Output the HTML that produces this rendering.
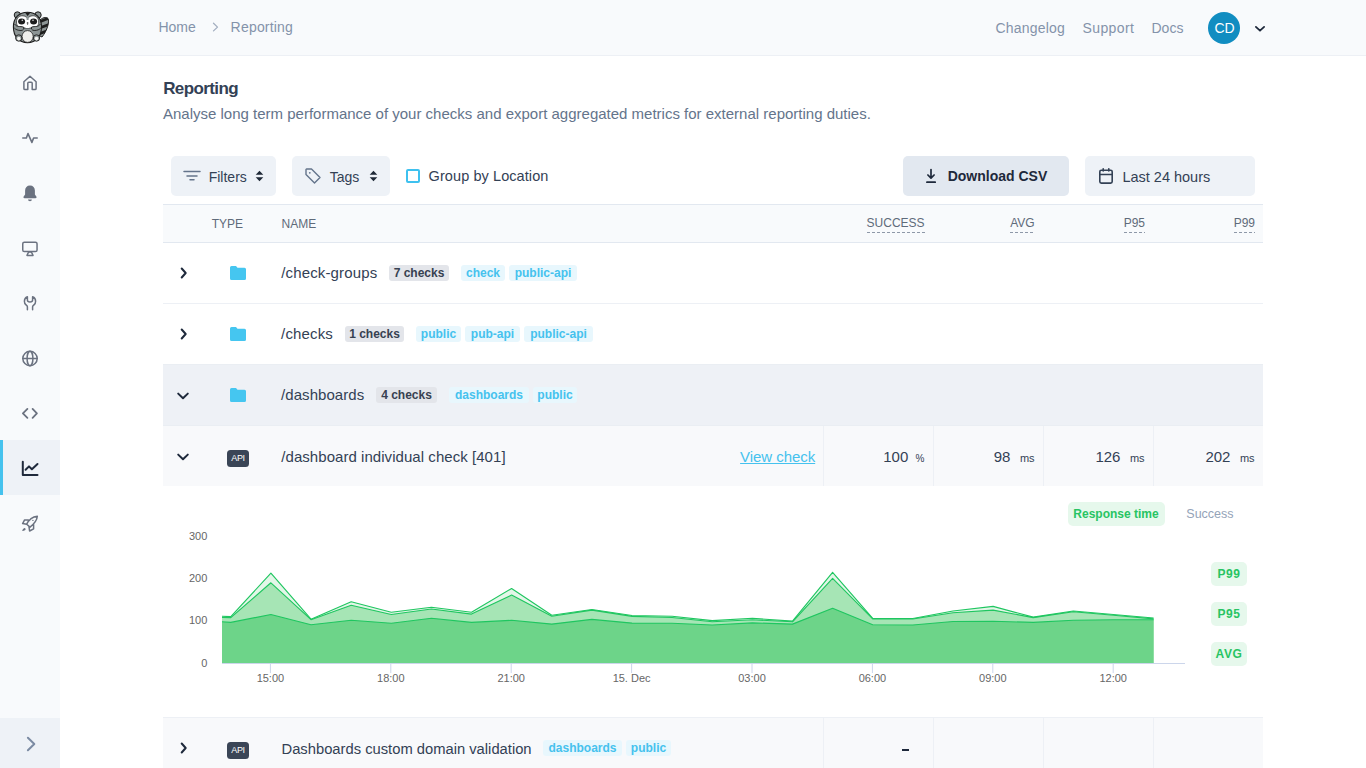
<!DOCTYPE html>
<html><head><meta charset="utf-8">
<style>
*{box-sizing:border-box;margin:0;padding:0}
html,body{width:1366px;height:768px;overflow:hidden;background:#fff;font-family:"Liberation Sans",sans-serif;color:#334155}
.abs{position:absolute}
.t{position:absolute;white-space:nowrap;line-height:1}
.badge{position:absolute;height:16px;border-radius:3px;font-weight:700;font-size:12px;line-height:16px;text-align:center;white-space:nowrap}
.gray{background:#e3e5ea;color:#374151}
.tag{background:#e8f7fd;color:#45c2ee}
svg{position:absolute;overflow:visible}
</style></head><body>
<div class="abs" style="left:0px;top:0px;width:60px;height:768px;background:#f8fafc;"></div>
<div class="abs" style="left:60px;top:0px;width:1306px;height:55px;background:#f8fafc;"></div>
<div class="abs" style="left:60px;top:55px;width:1306px;height:1px;background:#edf0f5;"></div>
<div class="abs" style="left:0px;top:440px;width:60px;height:55px;background:#eef2f7;"></div>
<div class="abs" style="left:0px;top:440px;width:3px;height:55px;background:#45c2ee;"></div>
<div class="abs" style="left:0px;top:718px;width:60px;height:50px;background:#eef2f7;"></div>
<svg style="left:18px;top:70.5px" width="24" height="24" viewBox="0 0 24 24" fill="none" stroke="#6b7280" stroke-width="1.5" stroke-linecap="round" stroke-linejoin="round"><path d="M5.9 10.8 L12 5.3 L18.1 10.8 V17.4 Q18.1 18.5 17 18.5 H14.2 V12.3 Q14.2 11.3 13.2 11.3 H10.8 Q9.8 11.3 9.8 12.3 V18.5 H7 Q5.9 18.5 5.9 17.4 Z"/></svg>
<svg style="left:18px;top:125.5px" width="24" height="24" viewBox="0 0 24 24" fill="none" stroke="#6b7280" stroke-width="1.6" stroke-linecap="round" stroke-linejoin="round"><path d="M4.8 12 H8.4 L10 7.6 L13.9 16.4 L15.6 12 H19.2"/></svg>
<svg style="left:18px;top:180.5px" width="24" height="24" viewBox="0 0 24 24" fill="none" stroke="#6b7280" stroke-width="1.5" stroke-linecap="round" stroke-linejoin="round"><path d="M7.1 13.5 V9.5 C7.1 6.5 9 4.5 12 4.5 C15 4.5 16.9 6.5 16.9 9.5 V13.5 L18.5 15.8 Q19 17.2 17.5 17.2 H6.5 Q5 17.2 5.5 15.8 Z" fill="#6b7280" stroke="none"/><path d="M10 18.5 H13.9 Q13.9 20.3 12 20.3 Q10 20.3 10 18.5 Z" fill="#6b7280" stroke="none"/></svg>
<svg style="left:18px;top:235.5px" width="24" height="24" viewBox="0 0 24 24" fill="none" stroke="#6b7280" stroke-width="1.5" stroke-linecap="round" stroke-linejoin="round"><rect x="4.75" y="6.25" width="14.3" height="9.3" rx="1.6"/><path d="M10.6 16 L9 19.4 H15 L13.4 16 Z"/></svg>
<svg style="left:18px;top:290.5px" width="24" height="24" viewBox="0 0 24 24" fill="none" stroke="#6b7280" stroke-width="1.5" stroke-linecap="round" stroke-linejoin="round"><path d="M9.4 18.8 V15.8 C9.4 15 8.8 14.5 8 13.8 C6.8 12.8 6.4 11.5 6.4 10.2 C6.4 8 7.7 6.3 9.4 5.7 V9 C9.4 10.3 10.4 11 12 11 C13.6 11 14.6 10.3 14.6 9 V5.7 C16.3 6.3 17.6 8 17.6 10.2 C17.6 11.5 17.2 12.8 16 13.8 C15.2 14.5 14.6 15 14.6 15.8 V18.8"/></svg>
<svg style="left:18px;top:345.5px" width="24" height="24" viewBox="0 0 24 24" fill="none" stroke="#6b7280" stroke-width="1.5" stroke-linecap="round" stroke-linejoin="round"><circle cx="12" cy="12.5" r="7.2"/><path d="M4.8 12.5 H19.2"/><ellipse cx="12" cy="12.5" rx="2.9" ry="7.2"/></svg>
<svg style="left:18px;top:400.5px" width="24" height="24" viewBox="0 0 24 24" fill="none" stroke="#6b7280" stroke-width="1.8" stroke-linecap="round" stroke-linejoin="round"><path d="M9.4 7.9 L4.9 12.4 L9.4 16.9 M14.6 7.9 L18.9 12.4 L14.6 16.9"/></svg>
<svg style="left:18px;top:455.5px" width="24" height="24" viewBox="0 0 24 24" fill="none" stroke="#1e293b" stroke-width="2" stroke-linecap="round" stroke-linejoin="round"><path d="M4.8 5.7 V18.9 H19.5"/><path d="M7.6 13.8 L11 10.4 L13.9 13.3 L19.5 8"/></svg>
<svg style="left:18px;top:510.5px" width="24" height="24" viewBox="0 0 24 24" fill="none" stroke="#6b7280" stroke-width="1.5" stroke-linecap="round" stroke-linejoin="round"><path d="M8.7 13.2 C10.5 9.5 14 5.8 19.3 5.2 C19 10 16.5 12.5 12 16.1 Z M10.3 8.9 H6.6 L4.6 12.6 L8.6 13.3 M15.6 13.6 V17.8 L11.6 20 L11 16"/><circle cx="14.9" cy="9.4" r="0.7" fill="#6b7280" stroke="none"/><path d="M4.2 20 C4.5 18.5 5.5 17.3 6.9 17.1 C7.6 17.6 7.8 18.3 7.3 19 C6.5 19.6 5.3 19.9 4.2 20 Z" fill="#6b7280" stroke="none"/></svg>
<svg style="left:18px;top:732px" width="24" height="24" viewBox="0 0 24 24" fill="none" stroke="#7b8ba3" stroke-width="2" stroke-linecap="round" stroke-linejoin="round"><path d="M9.9 5.8 L16.3 12 L9.9 18.2"/></svg>
<svg style="left:0;top:0" width="60" height="56" viewBox="0 0 60 56">
<defs><clipPath id="tc"><path d="M39 21 C42 17.5 46.5 16.5 48 18.5 C49.5 22 47.5 30 42 37 L38 35 Z"/></clipPath></defs>
<path d="M39 21 C42 17.5 46.5 16.5 48 18.5 C49.5 22 47.5 30 42 37 L38 35 Z" fill="#8d9595" stroke="#1d1d1d" stroke-width="1"/>
<g clip-path="url(#tc)" stroke="#1d1d1d" stroke-width="2.8"><path d="M38 22.5 L49 18 M38 28.5 L49 24.5 M37 34.5 L48 30.5"/></g>
<circle cx="17.4" cy="15" r="3.2" fill="#8d9595" stroke="#1d1d1d" stroke-width="1"/>
<circle cx="38" cy="15" r="3.2" fill="#8d9595" stroke="#1d1d1d" stroke-width="1"/>
<path d="M27.5 12.2 C36 12.2 41.5 18 41.5 27 C41.5 36.5 36 42.6 27.5 42.6 C19 42.6 13.4 36.5 13.4 27 C13.4 18 19 12.2 27.5 12.2 Z" fill="#8d9595" stroke="#1d1d1d" stroke-width="1.1"/>
<path d="M25 12.4 L30.5 12.4 L27.6 16 Z" fill="#1d1d1d"/>
<path d="M16.5 22 C16.5 17.5 19.5 15.5 23 15.8 C25 16 26 17 27.6 18 C29.2 17 30.2 16 32.2 15.8 C35.7 15.5 38.7 17.5 38.7 22 C38.7 26 36 28 33 28 L22 28 C19 28 16.5 26 16.5 22 Z" fill="#fff" stroke="#1d1d1d" stroke-width="0.7"/>

<rect x="25.5" y="19" width="4" height="9" fill="#fff"/>
<path d="M26.3 16.5 L28.9 16.5 L28.5 20 L26.7 20 Z" fill="#8d9595"/>
<ellipse cx="21.6" cy="21.5" rx="3.5" ry="3" fill="#1d1d1d"/>
<ellipse cx="33.6" cy="21.5" rx="3.5" ry="3" fill="#1d1d1d"/>
<circle cx="22.3" cy="20.2" r="0.8" fill="#ddd"/><circle cx="33" cy="20.2" r="0.8" fill="#ddd"/>
<ellipse cx="27.6" cy="23" rx="0.9" ry="0.7" fill="#1d1d1d"/>
<path d="M27.6 24.3 V25" stroke="#1d1d1d" stroke-width="0.8"/>
<path d="M14.5 24 C17 27.5 20 26 23.5 27 C24.5 28 23.5 30.5 21 30.5 C18 30.5 15.5 29.5 14.3 28" fill="#8d9595" stroke="#1d1d1d" stroke-width="0.9"/>
<path d="M40.5 24 C38 27.5 35 26 31.7 27 C30.7 28 31.7 30.5 34.2 30.5 C37.2 30.5 39.7 29.5 40.8 28" fill="#8d9595" stroke="#1d1d1d" stroke-width="0.9"/>
<ellipse cx="27.6" cy="36.5" rx="5.6" ry="5.9" fill="#efefec" stroke="#1d1d1d" stroke-width="0.8"/>
<circle cx="18.8" cy="38" r="3.2" fill="#8d9595" stroke="#1d1d1d" stroke-width="0.9"/>
<circle cx="18.8" cy="38.6" r="1.8" fill="#f4f4f2"/>
<circle cx="36.5" cy="38" r="3.2" fill="#8d9595" stroke="#1d1d1d" stroke-width="0.9"/>
<circle cx="36.5" cy="38.6" r="1.8" fill="#f4f4f2"/>
</svg>
<div class="t" style="left:158.4px;top:20px;font-size:14px;color:#8493aa;font-weight:400;">Home</div>
<svg style="left:210px;top:21px" width="12" height="12" viewBox="0 0 12 12" fill="none" stroke="#a3aec0" stroke-width="1.3" stroke-linecap="round" stroke-linejoin="round"><path d="M3.5 2.3 L7.5 6.1 L3.5 9.9"/></svg>
<div class="t" style="left:230.6px;top:20px;font-size:14px;color:#8493aa;font-weight:400;letter-spacing:0.2px">Reporting</div>
<div class="t" style="left:995.5px;top:21px;font-size:14px;color:#8493aa;font-weight:400;letter-spacing:0.2px">Changelog</div>
<div class="t" style="left:1082.5px;top:21px;font-size:14px;color:#8493aa;font-weight:400;letter-spacing:0.4px">Support</div>
<div class="t" style="left:1151.5px;top:21px;font-size:14px;color:#8493aa;font-weight:400;">Docs</div>
<div class="abs" style="left:1208px;top:12px;width:32px;height:32px;border-radius:50%;background:#118dc1"></div>
<div class="t" style="left:1124.6px;width:200px;text-align:center;top:21px;font-size:14px;color:#fff;font-weight:400;">CD</div>
<svg style="left:1254px;top:22px" width="12" height="12" viewBox="0 0 12 12" fill="none" stroke="#1e293b" stroke-width="1.8" stroke-linecap="round" stroke-linejoin="round"><path d="M1.9 4.9 L6 8.7 L10.1 4.9"/></svg>
<div class="t" style="left:163.2px;top:80px;font-size:17px;color:#334155;font-weight:700;letter-spacing:-0.6px">Reporting</div>
<div class="t" style="left:163px;top:106px;font-size:15px;color:#64748b;font-weight:400;">Analyse long term performance of your checks and export aggregated metrics for external reporting duties.</div>
<div class="abs" style="left:171px;top:156px;width:105px;height:40px;background:#eef2f7;border-radius:5px"></div>
<svg style="left:183px;top:168px" width="18" height="16" viewBox="0 0 18 16" fill="none" stroke="#64748b" stroke-width="1.5" stroke-linecap="round"><path d="M1 3.4 H17 M4 7.9 H14 M7 11.7 H11"/></svg>
<div class="t" style="left:208.7px;top:170px;font-size:14px;color:#334155;font-weight:400;">Filters</div>
<svg style="left:254.5px;top:170px" width="9" height="12" viewBox="0 0 9 12"><path d="M4.5 0.8 L8.3 4.8 H0.7 Z M4.5 11.2 L8.3 7.2 H0.7 Z" fill="#1f2937"/></svg>
<div class="abs" style="left:292px;top:156px;width:98px;height:40px;background:#eef2f7;border-radius:5px"></div>
<svg style="left:304px;top:167px" width="18" height="18" viewBox="0 0 18 18" fill="none" stroke="#64748b" stroke-width="1.4" stroke-linejoin="round"><path d="M2 2.5 V7.5 L10.5 16 L16 10.5 L7.5 2 H2.5 Z"/><circle cx="5.8" cy="5.8" r="0.9" fill="#64748b" stroke="none"/></svg>
<div class="t" style="left:329.8px;top:170px;font-size:14px;color:#334155;font-weight:400;">Tags</div>
<svg style="left:368.8px;top:170px" width="9" height="12" viewBox="0 0 9 12"><path d="M4.5 0.8 L8.3 4.8 H0.7 Z M4.5 11.2 L8.3 7.2 H0.7 Z" fill="#1f2937"/></svg>
<div class="abs" style="left:406px;top:169px;width:14px;height:14px;border:2px solid #3ec1ef;border-radius:2px"></div>
<div class="t" style="left:428.6px;top:169px;font-size:14.5px;color:#334155;font-weight:400;letter-spacing:0.08px">Group by Location</div>
<div class="abs" style="left:903px;top:156px;width:166px;height:40px;background:#e2e8f0;border-radius:5px"></div>
<svg style="left:923px;top:167px" width="16" height="17" viewBox="0 0 16 17" fill="none" stroke="#1e293b" stroke-width="1.7" stroke-linecap="round" stroke-linejoin="round"><path d="M8 2.6 V11 M4.9 8 L8 11.1 L11.1 8 M3.9 15.2 H12.2"/></svg>
<div class="t" style="left:947.7px;top:169px;font-size:14px;color:#1e293b;font-weight:700;">Download CSV</div>
<div class="abs" style="left:1085px;top:156px;width:170px;height:40px;background:#eef2f7;border-radius:5px"></div>
<svg style="left:1097px;top:166px" width="18" height="20" viewBox="0 0 18 20" fill="none" stroke="#334155" stroke-width="1.6" stroke-linecap="round" stroke-linejoin="round"><rect x="2.8" y="4.2" width="12.4" height="12.9" rx="1.5"/><path d="M2.8 8.5 H15.2 M6.2 2.7 V5 M11.8 2.7 V5"/></svg>
<div class="t" style="left:1122.4px;top:170px;font-size:14.5px;color:#334155;font-weight:400;">Last 24 hours</div>
<div class="abs" style="left:163px;top:204px;width:1100px;height:39px;background:#f8fafc;border-top:1px solid #e2e8f0;border-bottom:1px solid #e2e8f0"></div>
<div class="t" style="left:211.7px;top:218px;font-size:12px;color:#5f6b7a;font-weight:400;">TYPE</div>
<div class="t" style="left:281.5px;top:218px;font-size:12px;color:#5f6b7a;font-weight:400;">NAME</div>
<div class="t" style="right:441.4px;top:217px;font-size:12px;color:#5f6b7a;font-weight:400;padding-bottom:4px;background-image:linear-gradient(to right,#8e98a8 3px,transparent 3px);background-size:5px 1px;background-repeat:repeat-x;background-position:0 100%;height:16px">SUCCESS</div>
<div class="t" style="right:331.29999999999995px;top:217px;font-size:12px;color:#5f6b7a;font-weight:400;padding-bottom:4px;background-image:linear-gradient(to right,#8e98a8 3px,transparent 3px);background-size:5px 1px;background-repeat:repeat-x;background-position:0 100%;height:16px">AVG</div>
<div class="t" style="right:221px;top:217px;font-size:12px;color:#5f6b7a;font-weight:400;padding-bottom:4px;background-image:linear-gradient(to right,#8e98a8 3px,transparent 3px);background-size:5px 1px;background-repeat:repeat-x;background-position:0 100%;height:16px">P95</div>
<div class="t" style="right:111px;top:217px;font-size:12px;color:#5f6b7a;font-weight:400;padding-bottom:4px;background-image:linear-gradient(to right,#8e98a8 3px,transparent 3px);background-size:5px 1px;background-repeat:repeat-x;background-position:0 100%;height:16px">P99</div>
<div class="abs" style="left:163px;top:303px;width:1100px;height:1px;background:#edf0f5;"></div>
<svg style="left:178px;top:267.2px" width="12" height="12" viewBox="0 0 12 12" fill="none" stroke="#1e293b" stroke-width="2" stroke-linecap="round" stroke-linejoin="round"><path d="M3.7 1.5 L7.7 6 L3.7 10.5"/></svg>
<svg style="left:230px;top:266px" width="16" height="14" viewBox="0 0 16 14"><path d="M1.5 0 H6 L7.5 1.8 H14.5 A1.5 1.5 0 0 1 16 3.3 V12.5 A1.5 1.5 0 0 1 14.5 14 H1.5 A1.5 1.5 0 0 1 0 12.5 V1.5 A1.5 1.5 0 0 1 1.5 0 Z" fill="#45c6f0"/></svg>
<div class="t" style="left:281.2px;top:265px;font-size:15px;color:#334155;font-weight:400;letter-spacing:0.15px">/check-groups</div>
<div class="badge gray" style="left:389px;top:264.8px;width:60px">7 checks</div>
<div class="badge tag" style="left:461px;top:264.8px;width:44px">check</div>
<div class="badge tag" style="left:509px;top:264.8px;width:68px">public-api</div>
<svg style="left:178px;top:328px" width="12" height="12" viewBox="0 0 12 12" fill="none" stroke="#1e293b" stroke-width="2" stroke-linecap="round" stroke-linejoin="round"><path d="M3.7 1.5 L7.7 6 L3.7 10.5"/></svg>
<svg style="left:230px;top:327px" width="16" height="14" viewBox="0 0 16 14"><path d="M1.5 0 H6 L7.5 1.8 H14.5 A1.5 1.5 0 0 1 16 3.3 V12.5 A1.5 1.5 0 0 1 14.5 14 H1.5 A1.5 1.5 0 0 1 0 12.5 V1.5 A1.5 1.5 0 0 1 1.5 0 Z" fill="#45c6f0"/></svg>
<div class="t" style="left:281.1px;top:326px;font-size:15px;color:#334155;font-weight:400;letter-spacing:0.15px">/checks</div>
<div class="badge gray" style="left:345px;top:326px;width:59px">1 checks</div>
<div class="badge tag" style="left:416px;top:326px;width:45px">public</div>
<div class="badge tag" style="left:465px;top:326px;width:55px">pub-api</div>
<div class="badge tag" style="left:524px;top:326px;width:69px">public-api</div>
<div class="abs" style="left:163px;top:364px;width:1100px;height:62px;background:#eef1f6;"></div>
<div class="abs" style="left:163px;top:364px;width:1100px;height:1px;background:#eaeef3;"></div>
<div class="abs" style="left:163px;top:425px;width:1100px;height:1px;background:#eaeef3;"></div>
<svg style="left:177px;top:390px" width="12" height="12" viewBox="0 0 12 12" fill="none" stroke="#1e293b" stroke-width="2" stroke-linecap="round" stroke-linejoin="round"><path d="M1.2 3.6 L6 8.2 L10.8 3.6"/></svg>
<svg style="left:230px;top:388px" width="16" height="14" viewBox="0 0 16 14"><path d="M1.5 0 H6 L7.5 1.8 H14.5 A1.5 1.5 0 0 1 16 3.3 V12.5 A1.5 1.5 0 0 1 14.5 14 H1.5 A1.5 1.5 0 0 1 0 12.5 V1.5 A1.5 1.5 0 0 1 1.5 0 Z" fill="#45c6f0"/></svg>
<div class="t" style="left:281.1px;top:387px;font-size:15px;color:#334155;font-weight:400;letter-spacing:0.05px">/dashboards</div>
<div class="badge gray" style="left:376px;top:387px;width:61px">4 checks</div>
<div class="badge tag" style="left:449px;top:387px;width:80px">dashboards</div>
<div class="badge tag" style="left:533px;top:387px;width:44px">public</div>
<div class="abs" style="left:163px;top:426px;width:1100px;height:60px;background:#f8f9fb;"></div>
<div class="abs" style="left:823px;top:426px;width:1px;height:60px;background:#edf0f5;"></div>
<div class="abs" style="left:933px;top:426px;width:1px;height:60px;background:#edf0f5;"></div>
<div class="abs" style="left:1043px;top:426px;width:1px;height:60px;background:#edf0f5;"></div>
<div class="abs" style="left:1153px;top:426px;width:1px;height:60px;background:#edf0f5;"></div>
<svg style="left:177px;top:451px" width="12" height="12" viewBox="0 0 12 12" fill="none" stroke="#1e293b" stroke-width="2" stroke-linecap="round" stroke-linejoin="round"><path d="M1.2 3.6 L6 8.2 L10.8 3.6"/></svg>
<div class="abs" style="left:227px;top:450px;width:22px;height:17px;border-radius:3.5px;background:#3a4556;color:#fff;font-size:9px;line-height:17px;text-align:center;letter-spacing:-0.3px">API</div>
<div class="t" style="left:281.3px;top:449px;font-size:15px;color:#334155;font-weight:400;letter-spacing:0.05px">/dashboard individual check [401]</div>
<div class="t" style="left:740.1px;top:449px;font-size:15px;color:#45c2ee;font-weight:400;text-decoration:underline;text-underline-offset:1.4px;letter-spacing:-0.05px">View check</div>
<div class="t" style="right:457.70000000000005px;top:449px;font-size:15px;color:#334155;font-weight:400;">100</div>
<div class="t" style="right:441.6px;top:454px;font-size:10px;color:#334155;font-weight:400;">%</div>
<div class="t" style="right:355.6px;top:449px;font-size:15px;color:#334155;font-weight:400;">98</div>
<div class="t" style="right:331.4000000000001px;top:453px;font-size:11px;color:#334155;font-weight:400;">ms</div>
<div class="t" style="right:245.5999999999999px;top:449px;font-size:15px;color:#334155;font-weight:400;">126</div>
<div class="t" style="right:221.4000000000001px;top:453px;font-size:11px;color:#334155;font-weight:400;">ms</div>
<div class="t" style="right:135.5999999999999px;top:449px;font-size:15px;color:#334155;font-weight:400;">202</div>
<div class="t" style="right:111.40000000000009px;top:453px;font-size:11px;color:#334155;font-weight:400;">ms</div>
<div class="abs" style="left:1068px;top:502px;width:97px;height:24px;border-radius:5px;background:#e6f8ec"></div>
<div class="t" style="left:1073.3px;top:508px;font-size:12px;color:#28c463;font-weight:700;">Response time</div>
<div class="t" style="left:1186.3px;top:508px;font-size:12.5px;color:#94a3b8;font-weight:400;">Success</div>
<div class="abs" style="left:1211px;top:562px;width:36px;height:24px;border-radius:5px;background:#e6f8ec"></div>
<div class="t" style="left:1129px;width:200px;text-align:center;top:568px;font-size:12px;color:#28c463;font-weight:700;letter-spacing:0.6px">P99</div>
<div class="abs" style="left:1211px;top:602px;width:36px;height:24px;border-radius:5px;background:#e6f8ec"></div>
<div class="t" style="left:1129px;width:200px;text-align:center;top:608px;font-size:12px;color:#28c463;font-weight:700;letter-spacing:0.6px">P95</div>
<div class="abs" style="left:1211px;top:642px;width:36px;height:24px;border-radius:5px;background:#e6f8ec"></div>
<div class="t" style="left:1129px;width:200px;text-align:center;top:648px;font-size:12px;color:#28c463;font-weight:700;letter-spacing:0.6px">AVG</div>
<svg style="left:0;top:0" width="1366" height="768" viewBox="0 0 1366 768"><path d="M222.0,663 L222.0,616.2 230.8,616.6 270.9,573.2 311.0,619.2 351.2,601.8 391.3,612.2 431.4,607.3 471.5,612.2 511.6,588.5 551.8,615.3 591.9,609.5 632.0,615.5 672.1,616.2 712.2,620.6 752.4,618.3 792.5,621.1 832.6,572.3 872.7,618.3 912.8,618.5 953.0,611.0 993.1,606.4 1033.2,617.1 1073.3,611.0 1113.4,614.5 1153.6,618.0 L1153.6,663 Z" fill="#e3f6e8"/><path d="M222.0,663 L222.0,617.5 230.8,617.6 270.9,582.8 311.0,619.7 351.2,605.3 391.3,614.5 431.4,609.0 471.5,614.1 511.6,595.1 551.8,616.2 591.9,610.1 632.0,616.4 672.1,617.5 712.2,621.8 752.4,619.7 792.5,621.8 832.6,578.4 872.7,618.9 912.8,619.0 953.0,612.7 993.1,610.1 1033.2,617.6 1073.3,611.8 1113.4,615.3 1153.6,618.9 L1153.6,663 Z" fill="#a6e5b5"/><path d="M222.0,663 L222.0,621.8 230.8,622.4 270.9,614.5 311.0,624.7 351.2,620.3 391.3,623.2 431.4,618.3 471.5,622.4 511.6,620.3 551.8,624.1 591.9,619.4 632.0,623.1 672.1,623.2 712.2,625.0 752.4,622.9 792.5,624.1 832.6,608.3 872.7,624.7 912.8,625.0 953.0,621.5 993.1,621.3 1033.2,622.4 1073.3,620.3 1113.4,619.7 1153.6,619.7 L1153.6,663 Z" fill="#6dd489"/><path d="M222.0,616.2 L230.8,616.6 L270.9,573.2 L311.0,619.2 L351.2,601.8 L391.3,612.2 L431.4,607.3 L471.5,612.2 L511.6,588.5 L551.8,615.3 L591.9,609.5 L632.0,615.5 L672.1,616.2 L712.2,620.6 L752.4,618.3 L792.5,621.1 L832.6,572.3 L872.7,618.3 L912.8,618.5 L953.0,611.0 L993.1,606.4 L1033.2,617.1 L1073.3,611.0 L1113.4,614.5 L1153.6,618.0" fill="none" stroke="#1fc660" stroke-width="1.15" stroke-linejoin="round"/><path d="M222.0,617.5 L230.8,617.6 L270.9,582.8 L311.0,619.7 L351.2,605.3 L391.3,614.5 L431.4,609.0 L471.5,614.1 L511.6,595.1 L551.8,616.2 L591.9,610.1 L632.0,616.4 L672.1,617.5 L712.2,621.8 L752.4,619.7 L792.5,621.8 L832.6,578.4 L872.7,618.9 L912.8,619.0 L953.0,612.7 L993.1,610.1 L1033.2,617.6 L1073.3,611.8 L1113.4,615.3 L1153.6,618.9" fill="none" stroke="#1fc660" stroke-width="1.15" stroke-linejoin="round"/><path d="M222.0,621.8 L230.8,622.4 L270.9,614.5 L311.0,624.7 L351.2,620.3 L391.3,623.2 L431.4,618.3 L471.5,622.4 L511.6,620.3 L551.8,624.1 L591.9,619.4 L632.0,623.1 L672.1,623.2 L712.2,625.0 L752.4,622.9 L792.5,624.1 L832.6,608.3 L872.7,624.7 L912.8,625.0 L953.0,621.5 L993.1,621.3 L1033.2,622.4 L1073.3,620.3 L1113.4,619.7 L1153.6,619.7" fill="none" stroke="#1fc660" stroke-width="1.15" stroke-linejoin="round"/><path d="M222 663.5 H1185" stroke="#ccd6eb" stroke-width="1"/><path d="M270.4 663.5 V673" stroke="#ccd6eb" stroke-width="1"/><path d="M390.8 663.5 V673" stroke="#ccd6eb" stroke-width="1"/><path d="M511.2 663.5 V673" stroke="#ccd6eb" stroke-width="1"/><path d="M631.6 663.5 V673" stroke="#ccd6eb" stroke-width="1"/><path d="M752.0 663.5 V673" stroke="#ccd6eb" stroke-width="1"/><path d="M872.4 663.5 V673" stroke="#ccd6eb" stroke-width="1"/><path d="M992.8 663.5 V673" stroke="#ccd6eb" stroke-width="1"/><path d="M1113.2 663.5 V673" stroke="#ccd6eb" stroke-width="1"/></svg>
<div class="t" style="right:1158.7px;top:531px;font-size:11px;color:#666666;font-weight:400;">300</div>
<div class="t" style="right:1158.7px;top:573px;font-size:11px;color:#666666;font-weight:400;">200</div>
<div class="t" style="right:1158.7px;top:615px;font-size:11px;color:#666666;font-weight:400;">100</div>
<div class="t" style="right:1158.7px;top:658px;font-size:11px;color:#666666;font-weight:400;">0</div>
<div class="t" style="left:170.39999999999998px;width:200px;text-align:center;top:673px;font-size:11px;color:#666666;font-weight:400;">15:00</div>
<div class="t" style="left:290.79999999999995px;width:200px;text-align:center;top:673px;font-size:11px;color:#666666;font-weight:400;">18:00</div>
<div class="t" style="left:411.2px;width:200px;text-align:center;top:673px;font-size:11px;color:#666666;font-weight:400;">21:00</div>
<div class="t" style="left:531.6px;width:200px;text-align:center;top:673px;font-size:11px;color:#666666;font-weight:400;">15. Dec</div>
<div class="t" style="left:652.0px;width:200px;text-align:center;top:673px;font-size:11px;color:#666666;font-weight:400;">03:00</div>
<div class="t" style="left:772.4px;width:200px;text-align:center;top:673px;font-size:11px;color:#666666;font-weight:400;">06:00</div>
<div class="t" style="left:892.8000000000001px;width:200px;text-align:center;top:673px;font-size:11px;color:#666666;font-weight:400;">09:00</div>
<div class="t" style="left:1013.2px;width:200px;text-align:center;top:673px;font-size:11px;color:#666666;font-weight:400;">12:00</div>
<div class="abs" style="left:163px;top:717px;width:1100px;height:1px;background:#edf0f5;"></div>
<div class="abs" style="left:163px;top:718px;width:1100px;height:50px;background:#f8f9fb;"></div>
<div class="abs" style="left:823px;top:718px;width:1px;height:50px;background:#edf0f5;"></div>
<div class="abs" style="left:933px;top:718px;width:1px;height:50px;background:#edf0f5;"></div>
<div class="abs" style="left:1043px;top:718px;width:1px;height:50px;background:#edf0f5;"></div>
<div class="abs" style="left:1153px;top:718px;width:1px;height:50px;background:#edf0f5;"></div>
<svg style="left:178px;top:742px" width="12" height="12" viewBox="0 0 12 12" fill="none" stroke="#1e293b" stroke-width="2" stroke-linecap="round" stroke-linejoin="round"><path d="M3.7 1.5 L7.7 6 L3.7 10.5"/></svg>
<div class="abs" style="left:227px;top:742px;width:22px;height:17px;border-radius:3.5px;background:#3a4556;color:#fff;font-size:9px;line-height:17px;text-align:center;letter-spacing:-0.3px">API</div>
<div class="t" style="left:281.5px;top:742px;font-size:14.75px;color:#334155;font-weight:400;">Dashboards custom domain validation</div>
<div class="badge tag" style="left:543px;top:740px;width:79px">dashboards</div>
<div class="badge tag" style="left:626px;top:740px;width:45px">public</div>
<div class="abs" style="left:902px;top:749px;width:7px;height:1.6px;background:#1e293b;"></div>
</body></html>
